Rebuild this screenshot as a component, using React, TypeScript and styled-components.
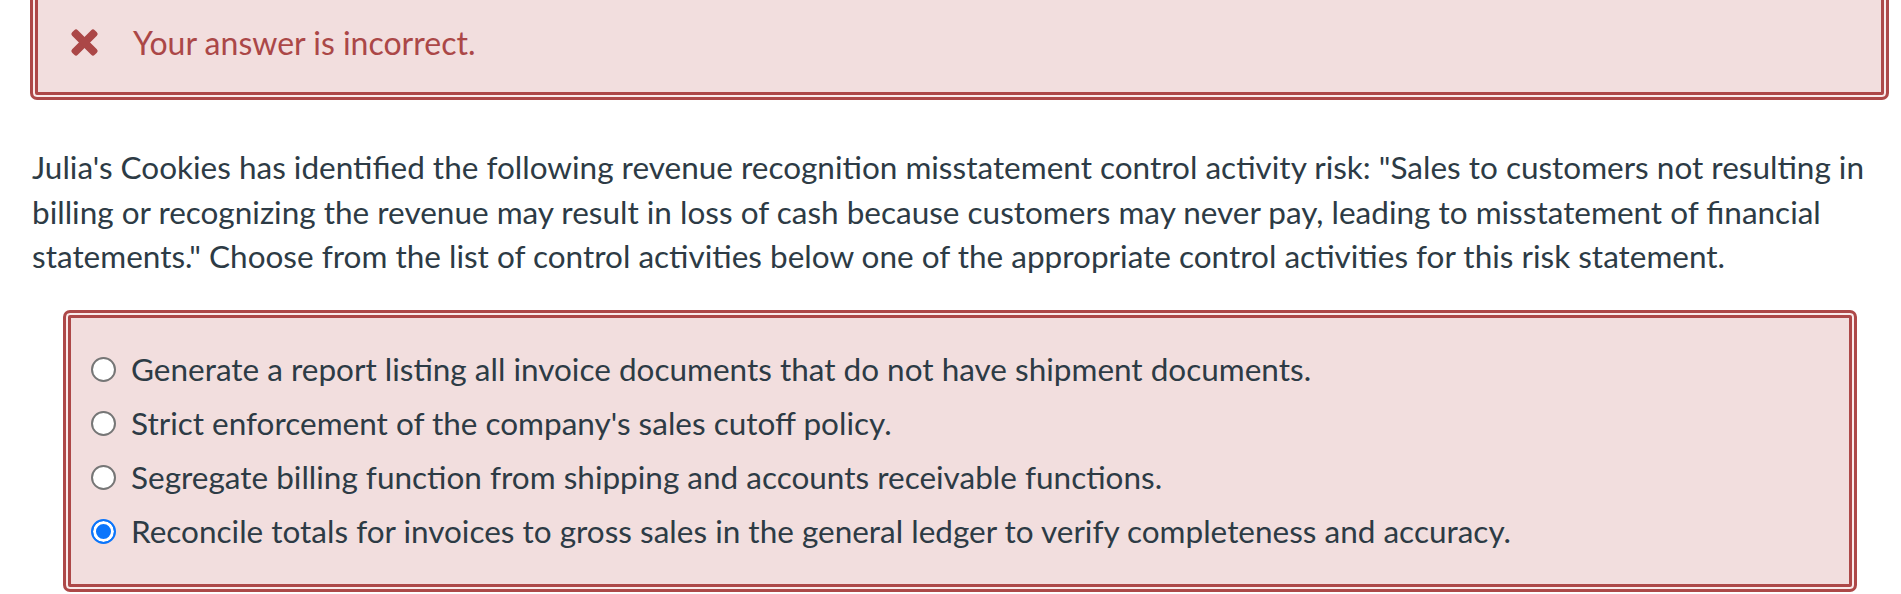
import React from "react";
import styled, { createGlobalStyle } from "styled-components";

const Global = createGlobalStyle`
  html, body { margin: 0; padding: 0; background: #ffffff; }
  body { font-family: Lato, "Open Sans", "Liberation Sans", sans-serif; color: #2d3b45; overflow: hidden; }
`;

const Page = styled.div`
  width: 1859px;
  padding-left: 30px;
  box-sizing: content-box;
`;

const Alert = styled.div`
  margin-top: -16px;
  height: 116px;
  box-sizing: border-box;
  background: #f2dede;
  border: 3px solid #ad4848;
  border-radius: 7px;
  box-shadow: inset 0 0 0 2px #f9eaea, inset 0 0 0 5px #ad4848;
  display: flex;
  align-items: center;
  padding: 0 0 0 37px;
  gap: 34px;
  color: #ab4747;
  font-size: 32px;
`;

const Question = styled.p`
  margin: 45px 0 0 2px;
  font-size: 31.5px;
  line-height: 44.5px;
  color: #2d3b45;
`;

const Answers = styled.div`
  margin: 31px 32px 0 33px;
  box-sizing: border-box;
  height: 282px;
  background: #f2dede;
  border: 3px solid #ad4848;
  border-radius: 7px;
  box-shadow: inset 0 0 0 2px #f9eaea, inset 0 0 0 5px #ad4848;
  padding: 29px 20px 0 25px;
  display: flex;
  flex-direction: column;
`;

const Row = styled.label`
  display: flex;
  align-items: center;
  gap: 15px;
  height: 54px;
  font-size: 31.5px;
  color: #2d3b45;
`;

const Radio = styled.span<{ $checked?: boolean }>`
  flex: none;
  width: 25px;
  height: 25px;
  box-sizing: border-box;
  border-radius: 50%;
  background: ${(p) => (p.$checked ? "#0b75fb" : "#ffffff")};
  border: 2px solid ${(p) => (p.$checked ? "#0b75fb" : "#767676")};
  box-shadow: ${(p) => (p.$checked ? "inset 0 0 0 3px #ffffff" : "none")};
  margin-top: 1px;
`;

const Icon = styled.svg`
  flex: none;
  width: 29px;
  height: 29px;
`;

const options = [
  { text: "Generate a report listing all invoice documents that do not have shipment documents.", checked: false },
  { text: "Strict enforcement of the company's sales cutoff policy.", checked: false },
  { text: "Segregate billing function from shipping and accounts receivable functions.", checked: false },
  { text: "Reconcile totals for invoices to gross sales in the general ledger to verify completeness and accuracy.", checked: true },
];

export default function App() {
  return (
    <>
      <Global />
      <Page>
        <Alert>
          <Icon viewBox="0 0 29 29" aria-hidden="true">
            <g fill="#ab4747" transform="rotate(45 14.5 14.5)">
              <rect x="10.5" y="-1.5" width="8" height="32" rx="2.5" />
              <rect x="-1.5" y="10.5" width="32" height="8" rx="2.5" />
            </g>
          </Icon>
          <span>Your answer is incorrect.</span>
        </Alert>
        <Question>
          Julia's Cookies has identified the following revenue recognition misstatement control activity risk: "Sales to customers not resulting in billing or recognizing the revenue may result in loss of cash because customers may never pay, leading to misstatement of financial statements." Choose from the list of control activities below one of the appropriate control activities for this risk statement.
        </Question>
        <Answers>
          {options.map((o) => (
            <Row key={o.text}>
              <Radio $checked={o.checked} />
              <span>{o.text}</span>
            </Row>
          ))}
        </Answers>
      </Page>
    </>
  );
}
